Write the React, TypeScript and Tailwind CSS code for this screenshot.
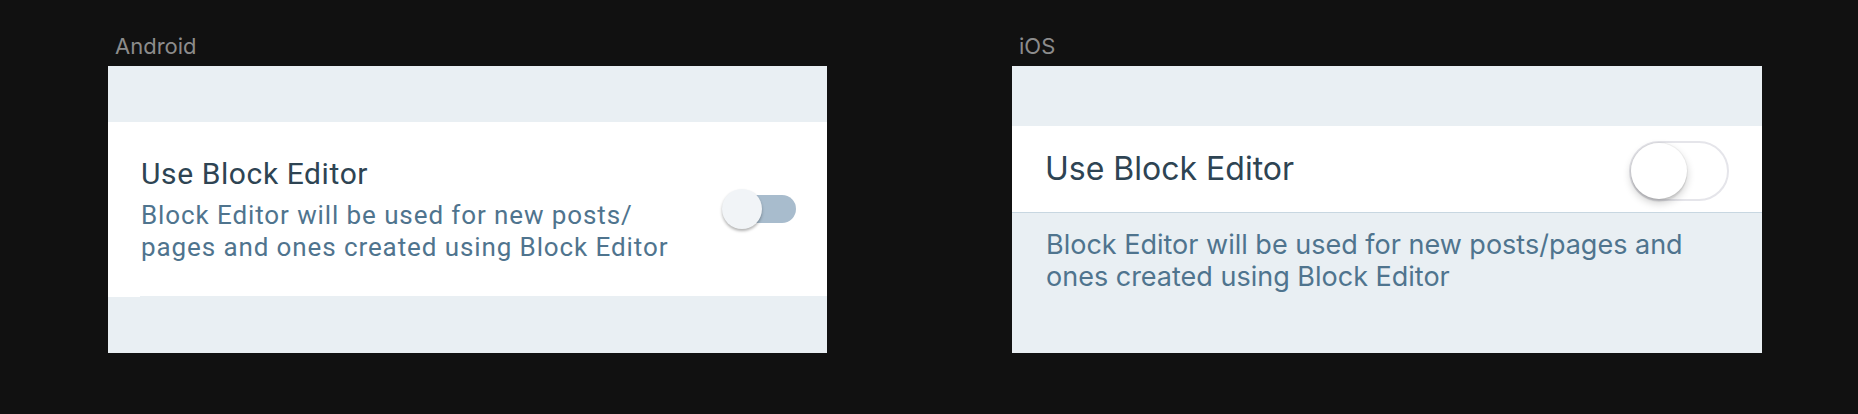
import React from 'react';

const androidFont = { fontFamily: 'Roboto, "Noto Sans", sans-serif' };
const iosFont = { fontFamily: 'Inter, "Open Sans", sans-serif' };

const PlatformLabel: React.FC<{ name: string }> = ({ name }) => (
  <div
    className="pt-[35px] mb-[9px] pl-[7px] text-[22px] leading-[22px] text-[#8c8c8c]"
    style={iosFont}
  >
    {name}
  </div>
);

const AndroidSwitch: React.FC = () => (
  <div className="relative w-[68px] h-[28px] rounded-full bg-[#a8bccd]">
    {/* thumb */}
    <div className="absolute left-[-6px] top-[-6px] w-[40px] h-[40px] rounded-full bg-[#f1f4f7] shadow-[0_2px_3px_rgba(0,0,0,0.3)]" />
  </div>
);

const IosSwitch: React.FC = () => (
  <div className="relative w-[100px] h-[60px] rounded-full border-2 border-[#e5e5ea] bg-white">
    <div className="absolute left-0 top-0 w-[56px] h-[56px] rounded-full bg-white shadow-[0_4px_8px_rgba(0,0,0,0.2),0_3px_1px_rgba(0,0,0,0.07),0_0_0_1px_rgba(0,0,0,0.04)]" />
  </div>
);

const AndroidPanel: React.FC = () => (
  <div className="flex flex-col">
    <PlatformLabel name="Android" />
    <div className="w-[719px] h-[287px] bg-[#e9eff3] flex flex-col" style={androidFont}>
      <div className="h-[56px]" />
      <div className="h-[174px] bg-white flex items-center justify-between pl-[33px] pr-[31px]">
        <div className="flex flex-col">
          <div className="text-[30px] leading-[36px] tracking-[0.6px] text-[#2e4453]">Use Block Editor</div>
          <div className="mt-[7px] text-[26px] leading-[32px] tracking-[0.9px] text-[#4f748e]">
            Block Editor will be used for new posts/
            <br />
            pages and ones created using Block Editor
          </div>
        </div>
        <AndroidSwitch />
      </div>
      {/* inset divider */}
      <div className="h-px flex">
        <div className="w-[32px] bg-white" />
      </div>
    </div>
  </div>
);

const IosPanel: React.FC = () => (
  <div className="flex flex-col">
    <PlatformLabel name="iOS" />
    <div className="w-[750px] h-[287px] bg-[#e9eff3] flex flex-col" style={iosFont}>
      <div className="h-[60px]" />
      <div className="h-[87px] bg-white border-b border-[#c8d7e1] flex items-center justify-between pl-[33px] pr-[33px]">
        <div className="text-[32px] leading-[40px] text-[#2e4453]">Use Block Editor</div>
        <div className="mt-[4px]">
          <IosSwitch />
        </div>
      </div>
      <div className="pt-[16px] pl-[34px] text-[27px] leading-[32px] text-[#4f748e]">
        Block Editor will be used for new posts/pages and
        <br />
        ones created using Block Editor
      </div>
    </div>
  </div>
);

export default function App() {
  return (
    <div className="w-full h-[414px] bg-[#111111] flex pl-[108px] gap-[185px]">
      <AndroidPanel />
      <IosPanel />
    </div>
  );
}
